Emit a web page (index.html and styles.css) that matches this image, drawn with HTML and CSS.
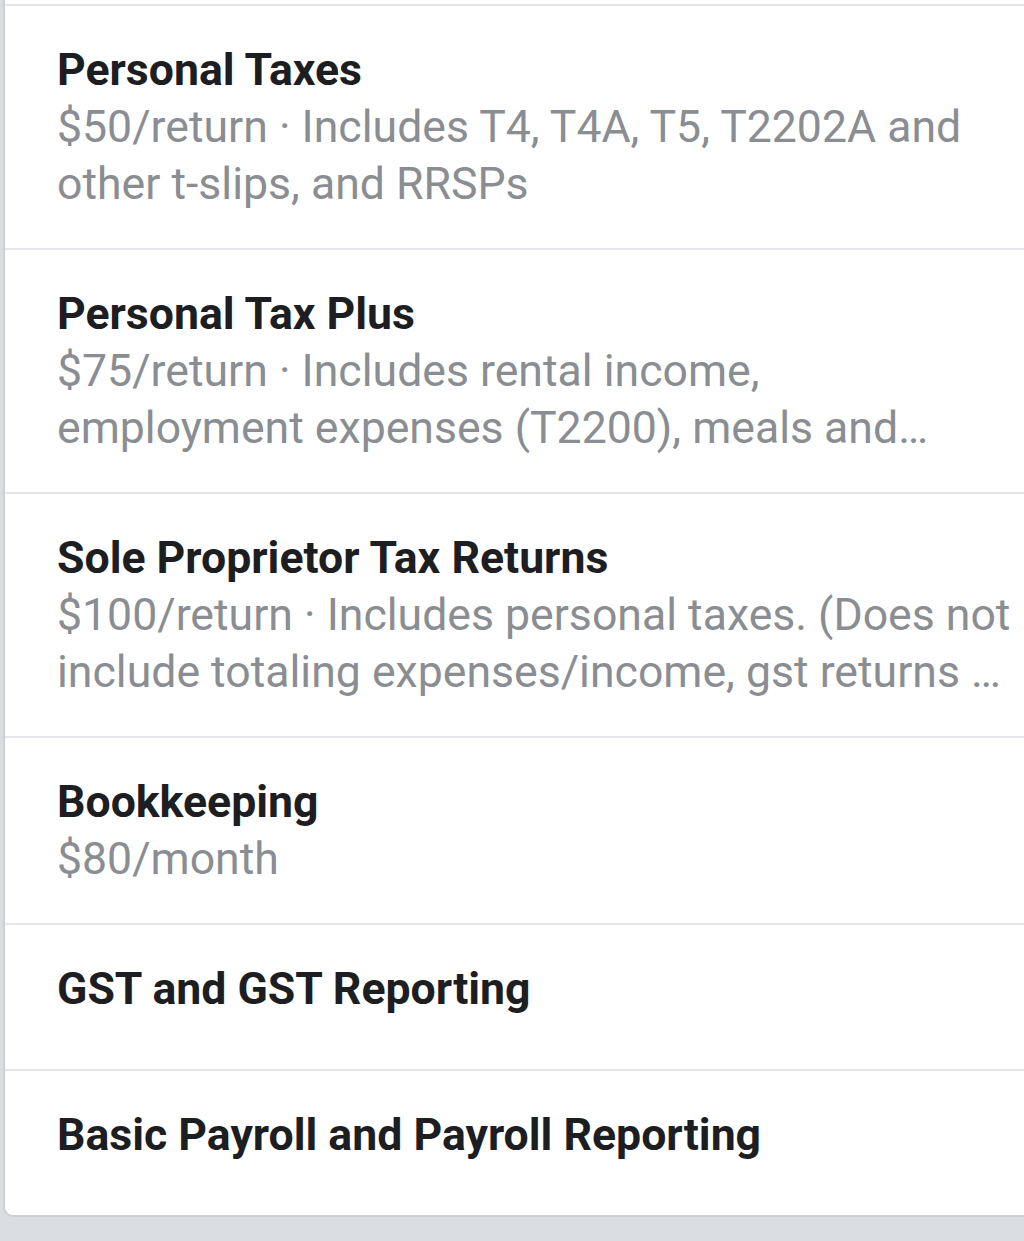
FILE: index.html
```html
<!DOCTYPE html>
<html>
<head>
<meta charset="utf-8">
<link rel="stylesheet" href="styles.css">
</head>
<body>
<div class="card">
  <div class="lead"></div>
  <div class="row">
    <div class="title">Personal Taxes</div>
    <div class="sub">$50/return · Includes T4, T4A, T5, T2202A and other t-slips, and RRSPs</div>
  </div>
  <div class="row">
    <div class="title">Personal Tax Plus</div>
    <div class="sub">$75/return · Includes rental income, employment expenses (T2200), meals and…</div>
  </div>
  <div class="row">
    <div class="title">Sole Proprietor Tax Returns</div>
    <div class="sub">$100/return · Includes personal taxes. (Does not include totaling expenses/income, gst returns …</div>
  </div>
  <div class="row">
    <div class="title">Bookkeeping</div>
    <div class="sub">$80/month</div>
  </div>
  <div class="row single">
    <div class="title">GST and GST Reporting</div>
  </div>
  <div class="row single">
    <div class="title">Basic Payroll and Payroll Reporting</div>
  </div>
</div>
</body>
</html>
```

FILE: styles.css
```css
html, body {
  margin: 0;
  padding: 0;
}
body {
  background: #dadde1;
  overflow-x: hidden;
  font-family: Roboto, "Noto Sans", sans-serif;
  height: 1241px;
}
.card {
  background: #ffffff;
  margin-left: 3px;
  margin-right: -30px;
  border-left: 2px solid #ccd0d5;
  border-bottom: 2px solid #ccd0d5;
  border-bottom-left-radius: 10px;
}
.lead {
  height: 4px;
}
.row {
  border-top: 2px solid #e4e6eb;
  padding: 36px 42px 35px 52px;
  display: flex;
  flex-direction: column;
}
.row.single {
  min-height: 146px;
  box-sizing: border-box;
}
.title {
  font-size: 44.6px;
  line-height: 57px;
  font-weight: 700;
  color: #1c1e21;
}
.sub {
  font-size: 44.6px;
  line-height: 57px;
  color: #8a8d91;
}
```
